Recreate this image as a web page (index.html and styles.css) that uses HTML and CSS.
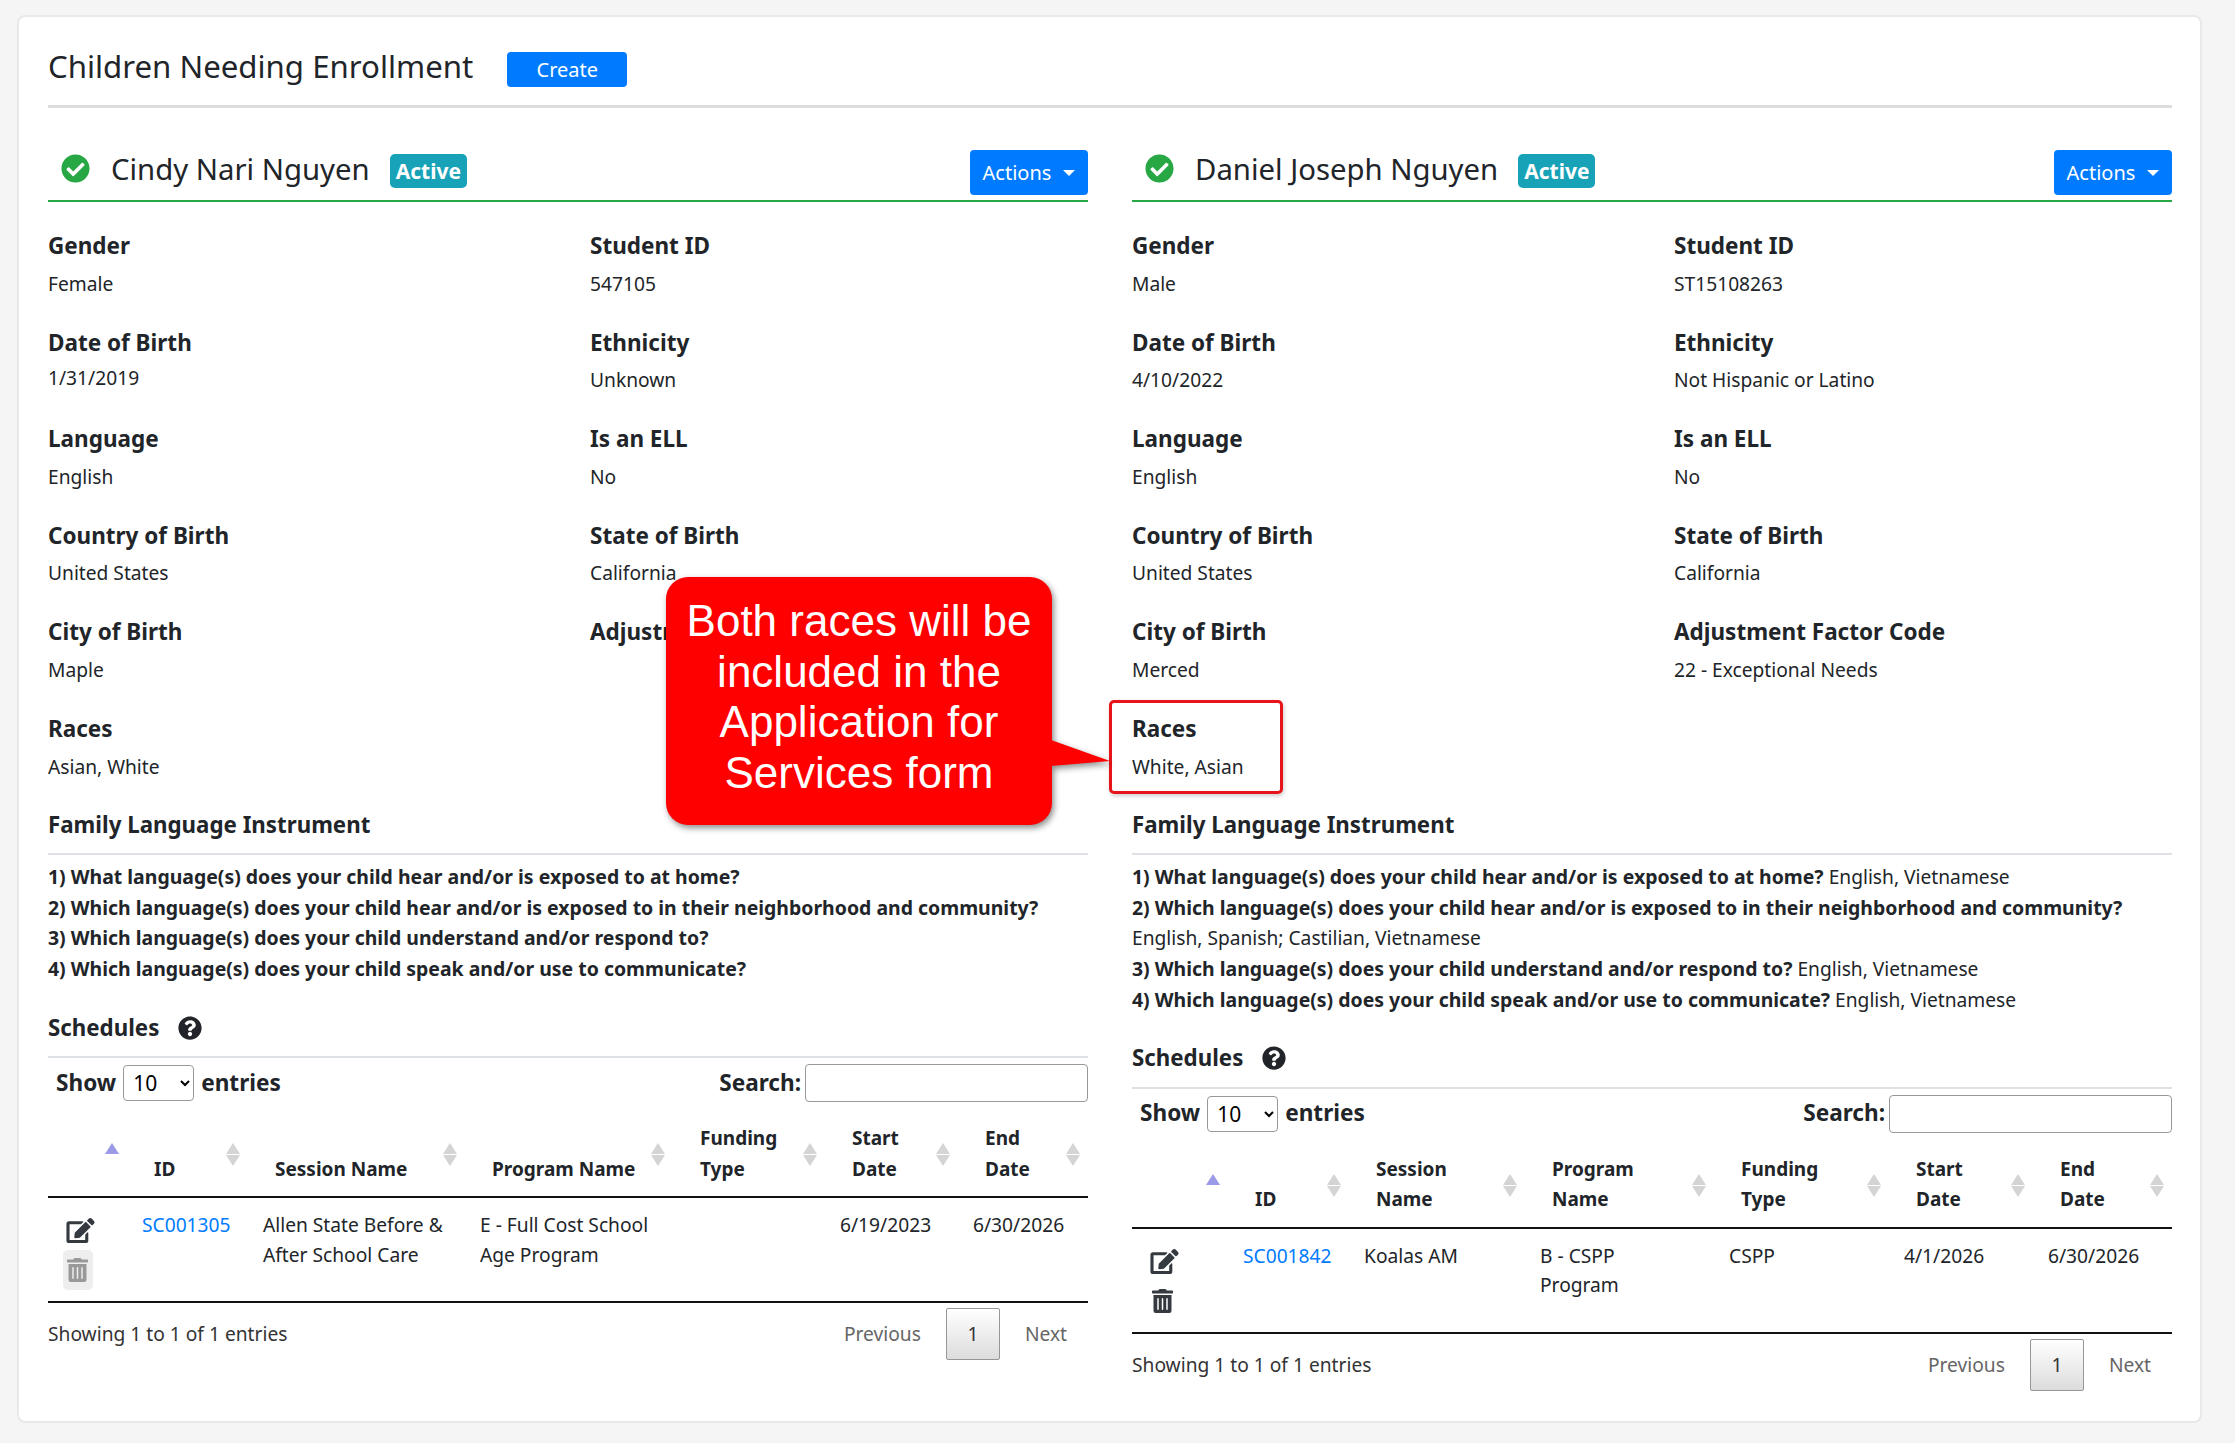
FILE: index.html
```html
<!DOCTYPE html>
<html lang="en">
<head>
    <meta charset="UTF-8">
    <title>Children Needing Enrollment</title>
    <link rel="stylesheet" href="styles.css">
</head>
<body>
    <div class="card">
        <div class="page-title">
            <h1>Children Needing Enrollment</h1>
            <a href="#" class="btn btn-create">Create</a>
        </div>

        <div class="columns">
            <!-- Cindy -->
            <section class="child">
                <div class="child-head">
                    <svg class="icon-check" viewBox="0 0 512 512"><path d="M504 256c0 136.967-111.033 248-248 248S8 392.967 8 256 119.033 8 256 8s248 111.033 248 248zM227.314 387.314l184-184c6.248-6.248 6.248-16.379 0-22.627l-22.627-22.627c-6.248-6.249-16.379-6.249-22.628 0L216 308.118l-70.059-70.059c-6.248-6.248-16.379-6.248-22.628 0l-22.627 22.627c-6.248 6.248-6.248 16.379 0 22.627l104 104c6.249 6.249 16.379 6.249 22.628.001z"/></svg>
                    <h2>Cindy Nari Nguyen</h2>
                    <span class="badge">Active</span>
                    <a href="#" class="btn btn-actions">Actions<span class="caret"></span></a>
                </div>
                <div class="fields">
                    <div class="field"><div class="label">Gender</div><div class="value">Female</div></div>
                    <div class="field"><div class="label">Student ID</div><div class="value">547105</div></div>
                    <div class="field"><div class="label">Date of Birth</div><div class="value value-tight">1/31/2019</div></div>
                    <div class="field"><div class="label">Ethnicity</div><div class="value">Unknown</div></div>
                    <div class="field"><div class="label">Language</div><div class="value">English</div></div>
                    <div class="field"><div class="label">Is an ELL</div><div class="value">No</div></div>
                    <div class="field"><div class="label">Country of Birth</div><div class="value">United States</div></div>
                    <div class="field"><div class="label">State of Birth</div><div class="value">California</div></div>
                    <div class="field"><div class="label">City of Birth</div><div class="value">Maple</div></div>
                    <div class="field"><div class="label">Adjustment Factor Code</div><div class="value"></div></div>
                    <div class="field"><div class="label">Races</div><div class="value">Asian, White</div></div>
                </div>
                <h3 class="sub-head">Family Language Instrument</h3>
                <div class="questions">
                    <div><b>1) What language(s) does your child hear and/or is exposed to at home?</b></div>
                    <div><b>2) Which language(s) does your child hear and/or is exposed to in their neighborhood and community?</b></div>
                    <div><b>3) Which language(s) does your child understand and/or respond to?</b></div>
                    <div><b>4) Which language(s) does your child speak and/or use to communicate?</b></div>
                </div>
                <h3 class="sub-head schedules-head">Schedules
                    <svg class="icon-help" viewBox="0 0 512 512"><path d="M504 256c0 136.997-111.043 248-248 248S8 392.997 8 256C8 119.083 119.043 8 256 8s248 111.083 248 248zM262.655 90c-54.497 0-89.255 22.957-116.549 63.758-3.536 5.286-2.353 12.415 2.715 16.258l34.699 26.31c5.205 3.947 12.621 3.008 16.665-2.122 17.864-22.658 30.113-35.797 57.303-35.797 20.429 0 45.698 13.148 45.698 32.958 0 14.976-12.363 22.667-32.534 33.976C247.128 238.528 216 254.941 216 296v4c0 6.627 5.373 12 12 12h56c6.627 0 12-5.373 12-12v-1.333c0-28.462 83.186-29.647 83.186-106.667 0-58.002-60.165-102-116.531-102zM256 338c-25.365 0-46 20.635-46 46 0 25.364 20.635 46 46 46s46-20.636 46-46c0-25.365-20.635-46-46-46z"/></svg>
                </h3>
                <div class="dt-top">
                    <label class="dt-length">Show <select><option>10</option></select> entries</label>
                    <label class="dt-search">Search: <input type="text"></label>
                </div>
                <table class="dt dt-left">
                    <colgroup><col><col><col><col><col><col><col></colgroup>
                    <thead>
                        <tr>
                            <th class="sort-asc"></th>
                            <th class="sort">ID</th>
                            <th class="sort">Session Name</th>
                            <th class="sort">Program Name</th>
                            <th class="sort">Funding Type</th>
                            <th class="sort">Start Date</th>
                            <th class="sort">End Date</th>
                        </tr>
                    </thead>
                    <tbody>
                        <tr>
                            <td>
                                <svg class="icon-edit" viewBox="0 0 576 512"><path d="M402.6 83.2l90.2 90.2c3.8 3.8 3.8 10 0 13.8L274.4 405.6l-92.8 10.3c-12.4 1.4-22.9-9.1-21.5-21.5l10.3-92.8L388.8 83.2c3.8-3.8 10-3.8 13.8 0zm162-22.9l-48.8-48.8c-15.2-15.2-39.9-15.2-55.2 0l-35.4 35.4c-3.8 3.8-3.8 10 0 13.8l90.2 90.2c3.8 3.8 10 3.8 13.8 0l35.4-35.4c15.2-15.3 15.2-40 0-55.2zM384 346.2V448H64V128h229.8c3.2 0 6.2-1.3 8.5-3.5l40-40c7.6-7.6 2.2-20.5-8.5-20.5H48C21.5 64 0 85.5 0 112v352c0 26.5 21.5 48 48 48h352c26.5 0 48-21.5 48-48V306.2c0-10.7-12.9-16-20.5-8.5l-40 40c-2.2 2.3-3.5 5.3-3.5 8.5z"/></svg>
                                <span class="trash trash-off"><svg viewBox="0 0 448 512"><path d="M32 464a48 48 0 0 0 48 48h288a48 48 0 0 0 48-48V128H32zm272-256a16 16 0 0 1 32 0v224a16 16 0 0 1-32 0zm-96 0a16 16 0 0 1 32 0v224a16 16 0 0 1-32 0zm-96 0a16 16 0 0 1 32 0v224a16 16 0 0 1-32 0zM432 32H312l-9.4-18.7A24 24 0 0 0 281.1 0H166.8a23.72 23.72 0 0 0-21.4 13.3L136 32H16A16 16 0 0 0 0 48v32a16 16 0 0 0 16 16h416a16 16 0 0 0 16-16V48a16 16 0 0 0-16-16z"/></svg></span>
                            </td>
                            <td><a href="#">SC001305</a></td>
                            <td>Allen State Before &amp;<br>After School Care</td>
                            <td>E - Full Cost School<br>Age Program</td>
                            <td></td>
                            <td>6/19/2023</td>
                            <td>6/30/2026</td>
                        </tr>
                    </tbody>
                </table>
                <div class="dt-bottom">
                    <div class="dt-info">Showing 1 to 1 of 1 entries</div>
                    <div class="pager"><span class="pager-link">Previous</span><span class="pager-current">1</span><span class="pager-link">Next</span></div>
                </div>
            </section>

            <!-- Daniel -->
            <section class="child">
                <div class="child-head">
                    <svg class="icon-check" viewBox="0 0 512 512"><path d="M504 256c0 136.967-111.033 248-248 248S8 392.967 8 256 119.033 8 256 8s248 111.033 248 248zM227.314 387.314l184-184c6.248-6.248 6.248-16.379 0-22.627l-22.627-22.627c-6.248-6.249-16.379-6.249-22.628 0L216 308.118l-70.059-70.059c-6.248-6.248-16.379-6.248-22.628 0l-22.627 22.627c-6.248 6.248-6.248 16.379 0 22.627l104 104c6.249 6.249 16.379 6.249 22.628.001z"/></svg>
                    <h2>Daniel Joseph Nguyen</h2>
                    <span class="badge">Active</span>
                    <a href="#" class="btn btn-actions">Actions<span class="caret"></span></a>
                </div>
                <div class="fields">
                    <div class="field"><div class="label">Gender</div><div class="value">Male</div></div>
                    <div class="field"><div class="label">Student ID</div><div class="value">ST15108263</div></div>
                    <div class="field"><div class="label">Date of Birth</div><div class="value">4/10/2022</div></div>
                    <div class="field"><div class="label">Ethnicity</div><div class="value">Not Hispanic or Latino</div></div>
                    <div class="field"><div class="label">Language</div><div class="value">English</div></div>
                    <div class="field"><div class="label">Is an ELL</div><div class="value">No</div></div>
                    <div class="field"><div class="label">Country of Birth</div><div class="value">United States</div></div>
                    <div class="field"><div class="label">State of Birth</div><div class="value">California</div></div>
                    <div class="field"><div class="label">City of Birth</div><div class="value">Merced</div></div>
                    <div class="field"><div class="label">Adjustment Factor Code</div><div class="value">22 - Exceptional Needs</div></div>
                    <div class="field field-marked"><div class="label">Races</div><div class="value">White, Asian</div></div>
                </div>
                <h3 class="sub-head">Family Language Instrument</h3>
                <div class="questions">
                    <div><b>1) What language(s) does your child hear and/or is exposed to at home?</b> English, Vietnamese</div>
                    <div><b>2) Which language(s) does your child hear and/or is exposed to in their neighborhood and community?</b> English, Spanish; Castilian, Vietnamese</div>
                    <div><b>3) Which language(s) does your child understand and/or respond to?</b> English, Vietnamese</div>
                    <div><b>4) Which language(s) does your child speak and/or use to communicate?</b> English, Vietnamese</div>
                </div>
                <h3 class="sub-head schedules-head">Schedules
                    <svg class="icon-help" viewBox="0 0 512 512"><path d="M504 256c0 136.997-111.043 248-248 248S8 392.997 8 256C8 119.083 119.043 8 256 8s248 111.083 248 248zM262.655 90c-54.497 0-89.255 22.957-116.549 63.758-3.536 5.286-2.353 12.415 2.715 16.258l34.699 26.31c5.205 3.947 12.621 3.008 16.665-2.122 17.864-22.658 30.113-35.797 57.303-35.797 20.429 0 45.698 13.148 45.698 32.958 0 14.976-12.363 22.667-32.534 33.976C247.128 238.528 216 254.941 216 296v4c0 6.627 5.373 12 12 12h56c6.627 0 12-5.373 12-12v-1.333c0-28.462 83.186-29.647 83.186-106.667 0-58.002-60.165-102-116.531-102zM256 338c-25.365 0-46 20.635-46 46 0 25.364 20.635 46 46 46s46-20.636 46-46c0-25.365-20.635-46-46-46z"/></svg>
                </h3>
                <div class="dt-top">
                    <label class="dt-length">Show <select><option>10</option></select> entries</label>
                    <label class="dt-search">Search: <input type="text"></label>
                </div>
                <table class="dt dt-right">
                    <colgroup><col><col><col><col><col><col><col></colgroup>
                    <thead>
                        <tr>
                            <th class="sort-asc"></th>
                            <th class="sort">ID</th>
                            <th class="sort">Session<br>Name</th>
                            <th class="sort">Program<br>Name</th>
                            <th class="sort">Funding Type</th>
                            <th class="sort">Start Date</th>
                            <th class="sort">End Date</th>
                        </tr>
                    </thead>
                    <tbody>
                        <tr>
                            <td>
                                <svg class="icon-edit" viewBox="0 0 576 512"><path d="M402.6 83.2l90.2 90.2c3.8 3.8 3.8 10 0 13.8L274.4 405.6l-92.8 10.3c-12.4 1.4-22.9-9.1-21.5-21.5l10.3-92.8L388.8 83.2c3.8-3.8 10-3.8 13.8 0zm162-22.9l-48.8-48.8c-15.2-15.2-39.9-15.2-55.2 0l-35.4 35.4c-3.8 3.8-3.8 10 0 13.8l90.2 90.2c3.8 3.8 10 3.8 13.8 0l35.4-35.4c15.2-15.3 15.2-40 0-55.2zM384 346.2V448H64V128h229.8c3.2 0 6.2-1.3 8.5-3.5l40-40c7.6-7.6 2.2-20.5-8.5-20.5H48C21.5 64 0 85.5 0 112v352c0 26.5 21.5 48 48 48h352c26.5 0 48-21.5 48-48V306.2c0-10.7-12.9-16-20.5-8.5l-40 40c-2.2 2.3-3.5 5.3-3.5 8.5z"/></svg>
                                <span class="trash"><svg viewBox="0 0 448 512"><path d="M32 464a48 48 0 0 0 48 48h288a48 48 0 0 0 48-48V128H32zm272-256a16 16 0 0 1 32 0v224a16 16 0 0 1-32 0zm-96 0a16 16 0 0 1 32 0v224a16 16 0 0 1-32 0zm-96 0a16 16 0 0 1 32 0v224a16 16 0 0 1-32 0zM432 32H312l-9.4-18.7A24 24 0 0 0 281.1 0H166.8a23.72 23.72 0 0 0-21.4 13.3L136 32H16A16 16 0 0 0 0 48v32a16 16 0 0 0 16 16h416a16 16 0 0 0 16-16V48a16 16 0 0 0-16-16z"/></svg></span>
                            </td>
                            <td><a href="#">SC001842</a></td>
                            <td>Koalas AM</td>
                            <td>B - CSPP<br>Program</td>
                            <td>CSPP</td>
                            <td>4/1/2026</td>
                            <td>6/30/2026</td>
                        </tr>
                    </tbody>
                </table>
                <div class="dt-bottom">
                    <div class="dt-info">Showing 1 to 1 of 1 entries</div>
                    <div class="pager"><span class="pager-link">Previous</span><span class="pager-current">1</span><span class="pager-link">Next</span></div>
                </div>
            </section>
        </div>
    </div>

    <!-- Annotation over the screenshot -->
    <div class="callout">Both races will be included in the Application for Services form</div>
</body>
</html>
```

FILE: styles.css
```css
* {
    margin: 0;
    padding: 0;
    box-sizing: border-box;
}

body {
    position: relative;
    background-color: #f5f5f5;
    padding: 15px 33px 20px 17px;
    color: #212529;
    font-family: "Noto Sans", sans-serif;
    font-size: 19.2px;
    line-height: 30.6px;
}

a {
    color: #007bff;
    text-decoration: none;
}

b {
    font-size: 19.45px;
}

.card {
    height: 1408px;
    background-color: #fff;
    border: 2px solid #e9e9e9;
    border-radius: 8px;
    padding: 0 28px 0 29px;
}

.page-title {
    display: flex;
    align-items: center;
    gap: 34px;
    padding: 35px 0 18px;
    border-bottom: 3px solid #ddd;
}

.page-title h1 {
    margin-top: -6px;
    font-size: 31.2px;
    font-weight: 400;
    line-height: 35px;
}

.btn {
    display: block;
    background-color: #007bff;
    color: #fff;
    border-radius: 4px;
    text-align: center;
    font-size: 20px;
}

.btn-create {
    width: 120px;
    height: 35px;
    line-height: 35px;
}

.columns {
    display: grid;
    grid-template-columns: 1040px 1040px;
    gap: 44px;
    margin-top: 42px;
}

.child-head {
    display: flex;
    align-items: flex-start;
    height: 52px;
    border-bottom: 2px solid #28a745;
}

.icon-check {
    width: 29px;
    height: 29px;
    margin: 4px 0 0 13px;
    fill: #28a745;
}

.child-head h2 {
    margin: 1px 0 0 21px;
    font-size: 29.3px;
    font-weight: 400;
    line-height: 36px;
}

.badge {
    margin: 4px 0 0 20px;
    padding: 0 6px;
    height: 34px;
    line-height: 34px;
    background-color: #17a2b8;
    color: #fff;
    font-size: 21px;
    font-weight: 700;
    border-radius: 5px;
}

.btn-actions {
    position: relative;
    margin-left: auto;
    width: 118px;
    height: 45px;
    line-height: 46px;
    padding-right: 24px;
}

.caret {
    position: absolute;
    top: 20px;
    right: 13px;
    border-top: 6px solid #fff;
    border-left: 6px solid transparent;
    border-right: 6px solid transparent;
}

.fields {
    display: grid;
    grid-template-columns: 542px 498px;
    margin-top: 29px;
}

.field {
    position: relative;
    height: 96.6px;
}

.label {
    font-size: 22.5px;
    font-weight: 700;
}

.value {
    margin-top: 7px;
}

.value-tight {
    margin-top: 5px;
}

/* red box around the Races field */
.field-marked::after {
    content: "";
    box-sizing: border-box;
    position: absolute;
    left: -23px;
    top: -14px;
    width: 174px;
    height: 94px;
    border: 3px solid #e8141c;
    border-radius: 5px;
    box-shadow: 1px 2px 4px rgba(0,0,0,0.2);
}

.sub-head {
    margin-top: -1px;
    font-size: 22.3px;
    font-weight: 700;
    padding-bottom: 13px;
    border-bottom: 2px solid #dee2e6;
}

.questions {
    margin-top: 7px;
}

.schedules-head {
    display: flex;
    align-items: center;
    gap: 19px;
    margin-top: 28px;
}

.icon-help {
    width: 24px;
    height: 24px;
    fill: #212529;
}

.dt-top {
    display: flex;
    justify-content: space-between;
    align-items: center;
    margin-top: 6px;
    height: 38px;
    font-size: 22.6px;
    font-weight: 700;
}

.dt-length {
    display: flex;
    align-items: center;
    gap: 7px;
    margin-left: 8px;
}

.dt-length select {
    width: 71px;
    height: 36px;
    padding-left: 5px;
    background-color: #fff;
    border: 1px solid #999;
    border-radius: 4px;
    font-family: "Noto Sans", sans-serif;
    font-size: 21px;
}

.dt-search {
    display: flex;
    align-items: center;
    gap: 4px;
}

.dt-search input {
    width: 283px;
    height: 38px;
    border: 1px solid #999;
    border-radius: 4px;
}

.dt {
    width: 1040px;
    table-layout: fixed;
    border-collapse: collapse;
    margin-top: 21px;
}

.dt-left col:nth-child(1) { width: 74px; }
.dt-left col:nth-child(2) { width: 121px; }
.dt-left col:nth-child(3) { width: 217px; }
.dt-left col:nth-child(4) { width: 208px; }
.dt-left col:nth-child(5) { width: 152px; }
.dt-left col:nth-child(6) { width: 133px; }
.dt-left col:nth-child(7) { width: 135px; }

.dt-right col:nth-child(1) { width: 91px; }
.dt-right col:nth-child(2) { width: 121px; }
.dt-right col:nth-child(3) { width: 176px; }
.dt-right col:nth-child(4) { width: 189px; }
.dt-right col:nth-child(5) { width: 175px; }
.dt-right col:nth-child(6) { width: 144px; }
.dt-right col:nth-child(7) { width: 144px; }

.dt th {
    position: relative;
    padding: 0 30px 12px 32px;
    border-bottom: 2px solid #111;
    text-align: left;
    vertical-align: bottom;
    font-size: 19px;
    font-weight: 700;
}

.dt td {
    height: 105px;
    padding: 12px 0 0 20px;
    vertical-align: top;
    line-height: 29.5px;
    border-bottom: 2px solid #111;
}

/* DataTables sort arrows */
.sort::before,
.sort::after,
.sort-asc::before {
    content: "";
    position: absolute;
    right: 3px;
    border-left: 7px solid transparent;
    border-right: 7px solid transparent;
}

.sort:last-child::before,
.sort:last-child::after {
    right: 8px;
}

.sort::before {
    top: 20px;
    border-bottom: 11px solid #d4d4d4;
}

.sort::after {
    top: 32px;
    border-top: 11px solid #d4d4d4;
}

.sort-asc::before {
    top: 20px;
    border-bottom: 11px solid #9a9ae6;
}

.icon-edit {
    display: block;
    width: 29px;
    height: 25px;
    margin: 8px 0 0 -2px;
    fill: #343a40;
}

.trash {
    display: flex;
    justify-content: flex-start;
    margin-top: 15px;
}

.trash svg {
    width: 21px;
    height: 24px;
    fill: #343a40;
}

.trash-off {
    width: 30px;
    height: 40px;
    margin: 7px 0 0 -5px;
    padding: 8px 4px;
    background-color: #eee;
    border-radius: 5px;
}

.trash-off svg {
    fill: #999;
}

.dt-bottom {
    display: flex;
    justify-content: space-between;
    align-items: flex-start;
    padding-top: 5px;
}

.dt-info {
    margin-top: 11px;
    color: #333;
}

.pager {
    display: flex;
    align-items: center;
    color: #666;
}

.pager-link {
    padding: 0 25px;
}

.pager-link:last-child {
    padding-right: 21px;
}

.pager-current {
    width: 54px;
    height: 52px;
    line-height: 50px;
    text-align: center;
    color: #333;
    border: 1px solid #979797;
    border-radius: 2px;
    background: linear-gradient(#fff, #dcdcdc);
}

.callout {
    position: absolute;
    left: 666px;
    top: 577px;
    width: 386px;
    height: 248px;
    padding: 19px 16px 0;
    background-color: #f00;
    border-radius: 22px;
    color: #fff;
    font-family: "Liberation Sans", Arial, sans-serif;
    font-size: 44px;
    line-height: 50.7px;
    text-align: center;
    filter: drop-shadow(2px 3px 3px rgba(0,0,0,0.45));
}

.callout::after {
    content: "";
    position: absolute;
    left: 385px;
    top: 163px;
    width: 59px;
    height: 26px;
    background-color: #f00;
    clip-path: polygon(0 0, 100% 81%, 0 100%);
}
```
